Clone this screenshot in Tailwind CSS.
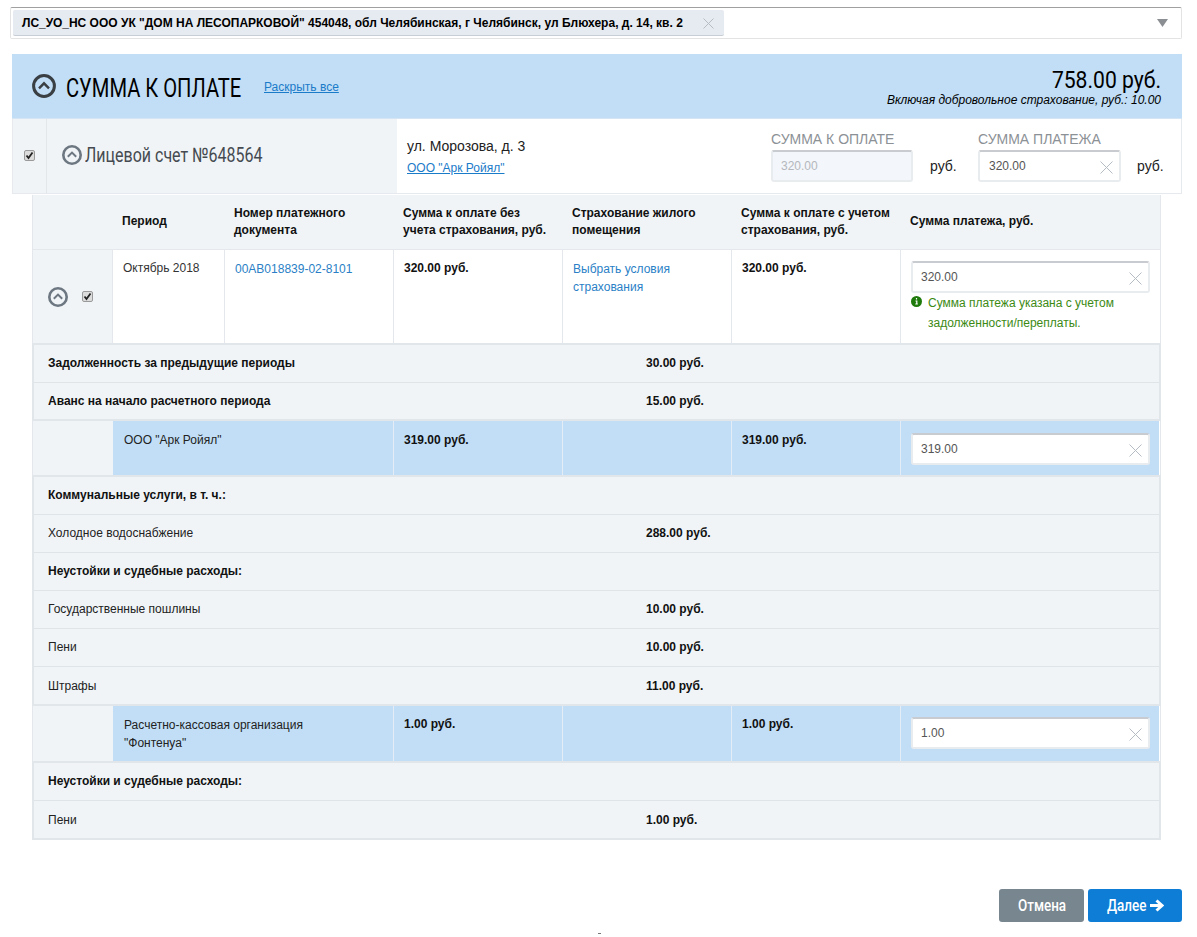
<!DOCTYPE html>
<html lang="ru"><head><meta charset="utf-8"><script src="https://cdn.jsdelivr.net/npm/@tailwindcss/browser@4"></script><title>Сумма к оплате</title></head>
<body class="relative bg-white text-black text-[12px] leading-[18px] [font-family:'Liberation_Sans',Arial,sans-serif] overflow-hidden h-[937px]">
<div class="pl-[10px] pr-[15px] pt-[7px]">
  <!-- select -->
  <div class="h-[32px] border border-[#e3e3e3] border-t-[#a0a0a0] rounded-[2px] flex items-center pl-[2px] pr-[13px] justify-between bg-white">
    <div class="w-[711px] h-[26px] bg-[#e6eaf1] rounded-[2px] border-b border-[#c9ced6] flex items-center pl-[9px] relative">
      <span class="font-bold text-[12px] text-black whitespace-nowrap">ЛС_УО_НС ООО УК "ДОМ НА ЛЕСОПАРКОВОЙ" 454048, обл Челябинская, г Челябинск, ул Блюхера, д. 14, кв. 2</span>
      <svg class="absolute left-[690px] top-[8px]" width="11" height="11" viewBox="0 0 11 11"><path d="M.5.5l10 10M10.500.5l-10 10" stroke="#b5bcc4" fill="none"/></svg>
    </div>
    <svg width="11" height="8" viewBox="0 0 11 8"><path d="M0 0h11L5.500 8z" fill="#8b8f93"/></svg>
  </div>

  <div class="ml-[2px] mt-[15px]">
    <!-- header -->
    <div class="h-[65px] bg-[#c1def6] border-b border-[#d5e5f3] flex items-center justify-between pl-[20px] pr-[21px]">
      <div class="flex items-center">
        <svg width="24" height="24" viewBox="0 0 24 24" fill="none" stroke="#3a3f44"><circle cx="12" cy="12" r="10.400" stroke-width="3"/><path d="M7 14.300l5-5 5 5" stroke-width="2.400"/></svg>
        <span class="ml-[10px] w-[176px] h-[30px] mt-[3px]"><span class="inline-block origin-left scale-x-[0.775] text-[26px] leading-[30px] whitespace-nowrap [font-family:'Roboto',sans-serif]">СУММА К ОПЛАТЕ</span></span>
        <a class="ml-[22px] mt-[2px] text-[12px] underline text-[#1a7bc9]">Раскрыть все</a>
      </div>
      <div class="text-right">
        <div class="h-[28px] flex justify-end"><span class="inline-block origin-right scale-x-[0.88] text-[24px] leading-[28px] whitespace-nowrap [font-family:'Roboto',sans-serif]">758.00 руб.</span></div>
        <div class="text-[12px] leading-[14px] italic -mt-px">Включая добровольное страхование, руб.: 10.00</div>
      </div>
    </div>
    <!-- account row -->
    <div class="h-[75px] flex border border-t-0 border-[#e6eaee]">
      <div class="w-[34px] bg-[#f0f4f7] border-r border-[#e3e7eb] flex items-center justify-center pb-[2px]">
        <span class="w-[11px] h-[11px] rounded-[2px] bg-[#dcdcdc] border border-[#9a9a9a] flex items-center justify-center"><svg width="9" height="9" viewBox="0 0 9 9"><path d="M1.500 4.500l2 2.500 4-5.500" stroke="#222" stroke-width="1.800" fill="none"/></svg></span>
      </div>
      <div class="w-[350px] bg-[#f0f4f7] flex items-center pl-[15px] pb-[2px]">
        <svg width="20" height="20" viewBox="0 0 20 20" fill="none" stroke="#6d7781"><circle cx="10" cy="10" r="8.700" stroke-width="2.600"/><path d="M5.800 11.800L10 7.600l4.200 4.200" stroke-width="2"/></svg>
        <span class="ml-[3px] w-[178px] h-[24px]"><span class="inline-block origin-left scale-x-[0.8] text-[20px] leading-[24px] text-[#454a50] whitespace-nowrap [font-family:'Roboto',sans-serif]">Лицевой счет №648564</span></span>
      </div>
      <div class="flex-1 bg-white flex justify-between pl-[10px] pr-[17px]">
        <div class="pt-[17px]">
          <div class="text-[14px] leading-[20px] text-[#222]">ул. Морозова, д. 3</div>
          <a class="block text-[12px] leading-[16px] mt-[4px] underline text-[#1a7bc9]">ООО "Арк Ройял"</a>
        </div>
        <div class="flex pt-[11px]">
          <div class="w-[207px]">
            <div class="text-[14px] leading-[18px] mb-[2px] text-[#8c9196] whitespace-nowrap">СУММА К ОПЛАТЕ</div>
            <div class="flex items-center">
              <div class="w-[142px] h-[32px] shrink-0 bg-[#f3f6fa] border-2 border-[#e9ecef] border-t-[#c8cbcf] rounded-[3px] pl-[8px] flex items-center text-[#b4b8bd]">320.00</div>
              <span class="ml-[17px] text-[14px] text-[#222]">руб.</span>
            </div>
          </div>
          <div class="w-[186px]">
            <div class="text-[14px] leading-[18px] mb-[2px] text-[#8c9196] whitespace-nowrap">СУММА ПЛАТЕЖА</div>
            <div class="flex items-center">
              <div class="relative w-[143px] h-[32px] shrink-0 bg-white border-2 border-[#e9ecef] border-t-[#c8cbcf] rounded-[3px] pl-[9px] flex items-center text-[#555]">320.00
                <svg class="absolute right-[6px] top-[9px]" width="13" height="13" viewBox="0 0 13 13"><path d="M.5.500l12 12M12.500.500l-12 12" stroke="#b5bcc4" fill="none"/></svg>
              </div>
              <span class="ml-[16px] text-[14px] text-[#222]">руб.</span>
            </div>
          </div>
        </div>
      </div>
    </div>

    <!-- table -->
    <div class="ml-[20px] mt-[1px] w-[1129px] border-x border-[#e4e8ec]">
      <div class="grid grid-cols-[80px_112px_169px_169px_169px_169px_258px] h-[55px] bg-[#f0f4f7] font-bold text-[#111] items-center leading-[17px] border-b border-[#e4e8ec]">
        <div></div>
        <div class="pl-[9px] pb-[2px]">Период</div>
        <div class="pl-[9px]">Номер платежного<br>документа</div>
        <div class="pl-[9px]">Сумма к оплате без<br>учета страхования, руб.</div>
        <div class="pl-[9px]">Страхование жилого<br>помещения</div>
        <div class="pl-[9px]">Сумма к оплате с учетом<br>страхования, руб.</div>
        <div class="pl-[9px] pb-[2px]">Сумма платежа, руб.</div>
      </div>
      <!-- period row -->
      <div class="grid grid-cols-[80px_112px_169px_169px_169px_169px_258px] h-[93px] bg-white">
        <div class="bg-[#f0f4f7] border-r border-[#e4e8ec] flex items-center pl-[15px]">
          <svg width="20" height="20" viewBox="0 0 20 20" fill="none" stroke="#6d7781"><circle cx="10" cy="10" r="8.700" stroke-width="2.600"/><path d="M5.800 11.800L10 7.600l4.200 4.200" stroke-width="2"/></svg>
          <span class="ml-[14px] w-[11px] h-[11px] rounded-[2px] bg-[#dcdcdc] border border-[#9a9a9a] flex items-center justify-center"><svg width="9" height="9" viewBox="0 0 9 9"><path d="M1.500 4.500l2 2.500 4-5.500" stroke="#222" stroke-width="1.800" fill="none"/></svg></span>
        </div>
        <div class="border-r border-[#e4e8ec] pl-[10px] pt-[9px] text-[#333]">Октябрь 2018</div>
        <div class="border-r border-[#e4e8ec] pl-[10px] pt-[10px] text-[#2a7fc6]">00AB018839-02-8101</div>
        <div class="border-r border-[#e4e8ec] pl-[10px] pt-[9px] font-bold text-[#111]">320.00 руб.</div>
        <div class="border-r border-[#e4e8ec] pl-[10px] pt-[10px] text-[#2a7fc6]">Выбрать условия<br>страхования</div>
        <div class="border-r border-[#e4e8ec] pl-[10px] pt-[9px] font-bold text-[#111]">320.00 руб.</div>
        <div class="pl-[10px] pr-[9px] pt-[11px]">
          <div class="relative h-[32px] bg-white border-2 border-[#e9ecef] border-t-[#c8cbcf] rounded-[3px] pl-[8px] flex items-center text-[#555]">320.00
            <svg class="absolute right-[6px] top-[9px]" width="13" height="13" viewBox="0 0 13 13"><path d="M.5.500l12 12M12.500.500l-12 12" stroke="#b5bcc4" fill="none"/></svg>
          </div>
          <div class="relative pl-[17px] text-[#3c8a14] leading-[20px]">
            <svg class="absolute left-0 top-[3px]" width="11" height="11" viewBox="0 0 11 11"><circle cx="5.500" cy="5.500" r="5.500" fill="#1f7a0c"/><path d="M5.500 2v1.500M4.500 5h1.300v3M4.300 8h2.500" stroke="#fff" stroke-width="1.200" fill="none"/></svg>
            Сумма платежа указана с учетом задолженности/переплаты.
          </div>
        </div>
      </div>
      <!-- group 1 -->
      <div class="border-2 border-[#e1e6ea] bg-[#f0f4f7] -mx-px">
        <div class="h-[38px] pb-px flex items-center font-bold text-[#111] border-b border-[#dfe4e9]"><span class="w-[612px] pl-[14px]">Задолженность за предыдущие периоды</span><span>30.00 руб.</span></div>
        <div class="h-[36px] pb-px flex items-center font-bold text-[#111]"><span class="w-[612px] pl-[14px]">Аванс на начало расчетного периода</span><span>15.00 руб.</span></div>
      </div>
      <!-- org 1 -->
      <div class="grid grid-cols-[80px_281px_169px_169px_169px_258px] h-[55px]">
        <div class="bg-[#f0f4f7]"></div>
        <div class="bg-[#c1def6] border-r border-[#e4edf5] pl-[11px] pt-[10px] text-[#222]">ООО "Арк Ройял"</div>
        <div class="bg-[#c1def6] border-r border-[#e4edf5] pl-[10px] pt-[10px] font-bold text-[#111]">319.00 руб.</div>
        <div class="bg-[#c1def6] border-r border-[#e4edf5]"></div>
        <div class="bg-[#c1def6] border-r border-[#e4edf5] pl-[10px] pt-[10px] font-bold text-[#111]">319.00 руб.</div>
        <div class="bg-[#c1def6] pl-[10px] pr-[9px] pt-[12px]">
          <div class="relative h-[32px] bg-white border-2 border-[#e9ecef] border-t-[#c8cbcf] rounded-[3px] pl-[8px] flex items-center text-[#555]">319.00
            <svg class="absolute right-[6px] top-[9px]" width="13" height="13" viewBox="0 0 13 13"><path d="M.5.500l12 12M12.500.500l-12 12" stroke="#b5bcc4" fill="none"/></svg>
          </div>
        </div>
      </div>
      <!-- group 2 -->
      <div class="relative border-2 border-[#e1e6ea] bg-[#f0f4f7] -mx-px -mt-px">
        <div class="h-[38px] pb-px flex items-center font-bold text-[#111] border-b border-[#dfe4e9]"><span class="pl-[14px]">Коммунальные услуги, в т. ч.:</span></div>
        <div class="h-[38px] pb-px flex items-center text-[#222] border-b border-[#dfe4e9]"><span class="w-[612px] pl-[14px]">Холодное водоснабжение</span><b class="text-[#111]">288.00 руб.</b></div>
        <div class="h-[38px] pb-px flex items-center font-bold text-[#111] border-b border-[#dfe4e9]"><span class="pl-[14px]">Неустойки и судебные расходы:</span></div>
        <div class="h-[38px] pb-px flex items-center text-[#222] border-b border-[#dfe4e9]"><span class="w-[612px] pl-[14px]">Государственные пошлины</span><b class="text-[#111]">10.00 руб.</b></div>
        <div class="h-[38px] pb-px flex items-center text-[#222] border-b border-[#dfe4e9]"><span class="w-[612px] pl-[14px]">Пени</span><b class="text-[#111]">10.00 руб.</b></div>
        <div class="h-[37px] flex items-center text-[#222]"><span class="w-[612px] pl-[14px]">Штрафы</span><b class="text-[#111]">11.00 руб.</b></div>
      </div>
      <!-- org 2 -->
      <div class="grid grid-cols-[80px_281px_169px_169px_169px_258px] h-[55px]">
        <div class="bg-[#f0f4f7]"></div>
        <div class="bg-[#c1def6] border-r border-[#e4edf5] pl-[11px] pt-[10px] text-[#222] leading-[18px]">Расчетно-кассовая организация<br>"Фонтенуа"</div>
        <div class="bg-[#c1def6] border-r border-[#e4edf5] pl-[10px] pt-[9px] font-bold text-[#111]">1.00 руб.</div>
        <div class="bg-[#c1def6] border-r border-[#e4edf5]"></div>
        <div class="bg-[#c1def6] border-r border-[#e4edf5] pl-[10px] pt-[9px] font-bold text-[#111]">1.00 руб.</div>
        <div class="bg-[#c1def6] pl-[10px] pr-[9px] pt-[11px]">
          <div class="relative h-[32px] bg-white border-2 border-[#e9ecef] border-t-[#c8cbcf] rounded-[3px] pl-[8px] flex items-center text-[#555]">1.00
            <svg class="absolute right-[6px] top-[9px]" width="13" height="13" viewBox="0 0 13 13"><path d="M.5.500l12 12M12.500.500l-12 12" stroke="#b5bcc4" fill="none"/></svg>
          </div>
        </div>
      </div>
      <!-- group 3 -->
      <div class="border-2 border-[#e1e6ea] bg-[#f0f4f7] -mx-px">
        <div class="h-[38px] pb-px flex items-center font-bold text-[#111] border-b border-[#dfe4e9]"><span class="pl-[14px]">Неустойки и судебные расходы:</span></div>
        <div class="h-[37px] flex items-center text-[#222]"><span class="w-[612px] pl-[14px]">Пени</span><b class="text-[#111]">1.00 руб.</b></div>
      </div>
    </div>

    <!-- buttons -->
    <div class="mt-[49px] flex justify-end gap-[4px] text-white text-[17px] font-medium [font-family:'Roboto',sans-serif]">
      <div class="w-[85px] h-[33px] pb-px bg-[#78868f] rounded-[3px] flex items-center justify-center"><span class="w-[48px] inline-block origin-left scale-x-[0.79] whitespace-nowrap">Отмена</span></div>
      <div class="w-[94px] h-[33px] pb-px bg-[#0e7dd6] rounded-[3px] flex items-center justify-center gap-[3px]"><span class="w-[39px] inline-block origin-left scale-x-[0.79] whitespace-nowrap">Далее</span>
        <svg width="15" height="13" viewBox="0 0 15 13"><path d="M1 6.500h11M7.500 1.500l5.500 5-5.500 5" stroke="#fff" stroke-width="3" fill="none"/></svg>
      </div>
    </div>
  </div>
</div>
<span class="absolute left-[598px] top-[933px] w-[3px] h-px bg-[#777]"></span>
</body></html>
